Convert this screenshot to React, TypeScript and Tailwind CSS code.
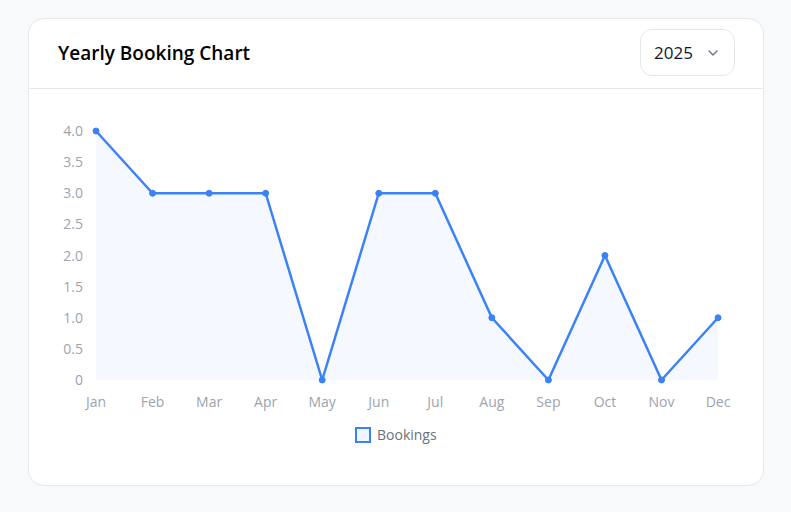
import { ChevronDown } from 'lucide-react';

const months = ['Jan', 'Feb', 'Mar', 'Apr', 'May', 'Jun', 'Jul', 'Aug', 'Sep', 'Oct', 'Nov', 'Dec'];
const values = [4, 3, 3, 3, 0, 3, 3, 1, 0, 2, 0, 1];
const ticks = [0, 0.5, 1, 1.5, 2, 2.5, 3, 3.5, 4];

function BookingChart() {
  const x = (i: number) => 67 + i * 56.55;
  const y = (v: number) => 291 - v * 62.25;
  const line = values.map((v, i) => `${i ? 'L' : 'M'}${x(i)},${y(v)}`).join(' ');
  const area = `${line} L${x(11)},${y(0)} L${x(0)},${y(0)} Z`;

  return (
    <svg width="736" height="396" className="block" style={{ fontFamily: '"Open Sans", "Noto Sans", sans-serif' }}>
      {ticks.map(t => (
        <text key={t} x="54" y={y(t) + 5} textAnchor="end" fontSize="14" fill="#9ca3af">
          {t === 0 ? '0' : t.toFixed(1)}
        </text>
      ))}
      {months.map((m, i) => (
        <text key={m} x={x(i)} y="318" textAnchor="middle" fontSize="14" fill="#9ca3af">{m}</text>
      ))}
      <path d={area} fill="#3b82f6" fillOpacity="0.05" />
      <path d={line} fill="none" stroke="#3b82f6" strokeWidth="2.5" strokeLinejoin="round" />
      {values.map((v, i) => (
        <circle key={i} cx={x(i)} cy={y(v)} r="3" fill="#3b82f6" stroke="#3b82f6" strokeWidth="1" />
      ))}
      <rect x="327" y="339" width="14" height="14" fill="#eff6ff" stroke="#3b82f6" strokeWidth="2" />
      <text x="348" y="351" fontSize="14" fill="#6b7280">Bookings</text>
    </svg>
  );
}

export default function App() {
  return (
    <div className="min-h-screen bg-[#f8f9fb] pt-[18px] pl-[28px]" style={{ fontFamily: '"Open Sans", "Noto Sans", sans-serif' }}>
      <div className="w-[736px] h-[468px] bg-white border border-gray-200 rounded-2xl overflow-hidden">
        <div className="h-[70px] flex items-center justify-between pl-[29px] pr-[28px] border-b border-gray-200">
          <h2 className="text-[19px] font-semibold text-black">Yearly Booking Chart</h2>
          <button className="h-[47px] w-[95px] mt-[-2px] flex items-center justify-center gap-3 border border-gray-200 rounded-xl text-[17px] text-gray-900">
            2025
            <ChevronDown className="w-4 h-4 text-gray-500" />
          </button>
        </div>
        <BookingChart />
      </div>
    </div>
  );
}
